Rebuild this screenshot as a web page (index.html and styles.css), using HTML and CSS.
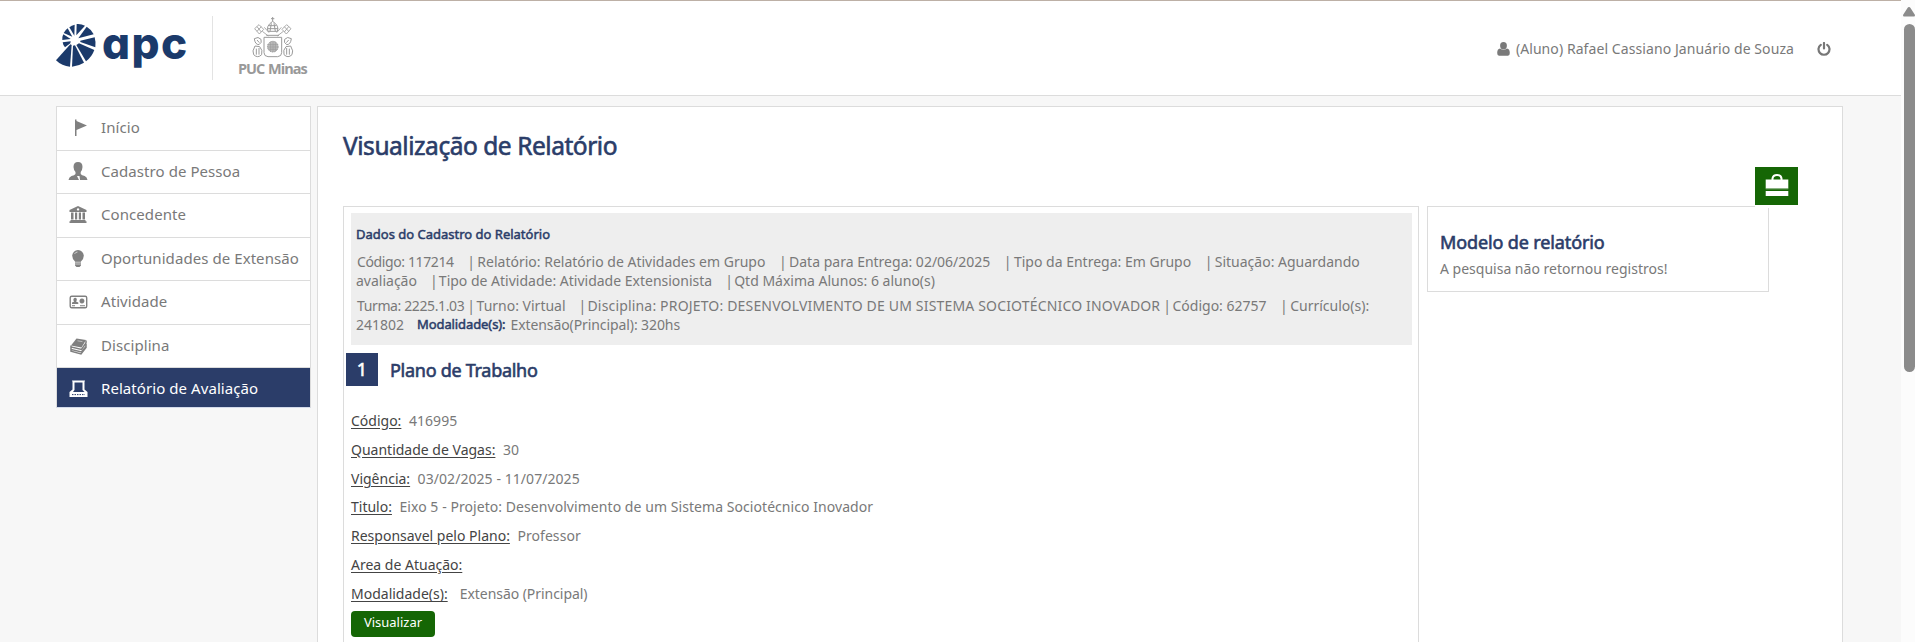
FILE: index.html
```html
<!DOCTYPE html>
<html lang="pt-BR">
<head>
<meta charset="utf-8">
<title>APC - Visualização de Relatório</title>
<link rel="stylesheet" href="styles.css">
</head>
<body>
<div class="page">
  <header class="header">
    <div class="brand">
      <svg class="brand-mark" viewBox="0 0 132 150"><g fill="#1b3a6b"><path d="M68 12Q82 11 93 17L67 46Z"/><path d="M98 20Q112 28 119 43L73 55Z"/><path d="M122 52Q126 66 124 82L79 66V62Z"/><path d="M121 90Q114 110 96 124L67 75L75 70Z"/><path d="M90 128Q74 138 54 140L57 77L63 76Z"/><path d="M6 121Q24 139 48 140L53 75L49 73Z"/><path d="M33 82Q27 76 26 67L50 64L49 70Z"/><path d="M25 60Q24 50 28 43L50 57Z"/><path d="M29 39Q33 31 41 25L55 50Z"/><path d="M46 22Q53 16 62 14L61 47Z"/></g></svg>
      <span class="brand-name">apc</span>
    </div>
    <div class="puc">
      <svg class="crest" viewBox="0 0 168 144" fill="none" stroke="#9a9a9a" stroke-width="3"><path d="M83 9V22M78 14H88M69 52Q62 36 83 22Q104 36 97 52ZM67 44H99M72 35H94M75 52L79 28M91 52L87 28"/><path d="M29 44L42 32L56 46L43 60ZM111 46L125 32L138 44L124 60ZM36 52L49 38M36 38L49 54M118 38L131 52M131 38L118 54M52 52L70 66M115 52L97 66M58 40L72 56M109 40L95 56" stroke-width="2.5"/><path d="M57 70H110V116Q110 127 98 128H69Q57 127 57 116Z"/><path d="M64 64H102"/><circle cx="83.500" cy="98" r="16" fill="#bdbdbd" stroke-dasharray="4 2"/><path d="M68 92H99M68 99H99M70 106H97M77 83V113M84 82V114M91 83V113" stroke-width="2"/><path d="M28 74Q40 66 48 76Q52 86 42 92Q30 92 28 74ZM30 96Q20 112 26 122Q38 134 50 122Q54 108 44 98ZM34 104V122M42 102V122M139 74Q127 66 119 76Q115 86 125 92Q137 92 139 74ZM137 96Q147 112 141 122Q129 134 117 122Q113 108 123 98ZM133 104V122M125 102V122M36 78L43 86M131 78L124 86"/></svg>
      <span class="puc-name">PUC Minas</span>
    </div>
    <div class="user">
      <svg class="user-icon" viewBox="0 0 13 14"><path fill="#7a7a7a" d="M6.500 0a3.400 3.700 0 0 1 0 7.400a3.400 3.700 0 0 1 0-7.400M3 6.600Q6.500 9.500 10 6.600Q12.800 7 12.800 11Q12.800 13.700 11 13.700H2Q.2 13.700 .2 11Q.2 7 3 6.600"/></svg>
      <span class="user-name">(Aluno) Rafael Cassiano Januário de Souza</span>
      <svg class="power" viewBox="0 0 14 14" fill="none" stroke="#777" stroke-width="2.200" stroke-linecap="round"><path d="M7 1V6.500M3.800 2.800A5.500 5.500 0 1 0 10.200 2.800"/></svg>
    </div>
  </header>
  <div class="body">
    <nav class="menu">
      <a class="item"><svg viewBox="0 0 20 20"><path fill="#808080" d="M7 1.500h1.500V3L19 7.500L8.500 12V18H7z"/></svg>Início</a>
      <a class="item"><svg viewBox="0 0 20 20"><path fill="#808080" d="M10 0q4.500 0 4.500 5q0 2.500-1.800 5v2q1 1.300 4 2Q19 15 19.500 18H.5Q1 15 3.500 14q3-.7 4-2v-2Q5.500 7.500 5.500 5Q5.500 0 10 0"/><path fill="#fff" d="M9 14h2.500l.5 4h-1z"/></svg>Cadastro de Pessoa</a>
      <a class="item"><svg viewBox="0 0 20 20"><path fill="#808080" fill-rule="evenodd" d="M10 1L18.500 5v2H1.500V5zM10 3.200a1.200 1.200 0 1 0 .1 0M3 7.500h2.500v7H3zm4 0h2.200v7H7zm3.800 0H13v7h-2.200zm3.700 0H17v7h-2.500zM2.500 15h15v1.200h1V18H1.500v-1.800h1z"/></svg>Concedente</a>
      <a class="item"><svg viewBox="0 0 20 20"><path fill="#808080" d="M10 1a5.800 5.800 0 0 1 5.800 5.800q0 3-2.800 5.700v4l-1.500 1.500h-3L7 16.500v-4Q4.200 9.800 4.200 6.800A5.800 5.800 0 0 1 10 1"/><path stroke="#fff" stroke-width=".6" d="M7 13.200h6M7 15h6M6.500 5Q7.500 3 9.500 3" fill="none"/></svg>Oportunidades de Extensão</a>
      <a class="item"><svg viewBox="0 0 20 20"><rect x="2.200" y="4.200" width="16.500" height="11.600" rx="1.500" fill="none" stroke="#808080" stroke-width="1.400"/><path fill="#808080" d="M7 5.700a1.800 2 0 0 1 1 3.700l2.300 1V12H4v-1.600l2.200-1a1.800 2 0 0 1 .8-3.700M14 6.500a2.500 2.500 0 1 1-.1 0M4 13.300h3v1H4zm8 0h5v1h-5z"/></svg>Atividade</a>
      <a class="item"><svg viewBox="0 0 20 20"><path fill="#808080" d="M8.500 2.500L18 4L13.500 11.500L3 9.500z"/><path fill="none" stroke="#808080" stroke-width="1.500" d="M18 4.500v2.500l-4.500 6.500L3 11V9.500M18 8v2.500L13.500 16L3 13.500v-2M3 13.500v1.800l10 2.700l5-6.500v-1"/><path stroke="#ccc" stroke-width=".8" d="M9.500 4.800l5 .9"/></svg>Disciplina</a>
      <a class="item active"><svg viewBox="0 0 20 20"><path fill="#fff" fill-rule="evenodd" d="M4 1.500h13l-.5 1.500v7.500L19.500 13v5H1.500v-5l3-2.500V3zM6.500 3.500V11L5 13h11.500L14.500 11V3.500z"/><path stroke="#2b3d69" stroke-dasharray="1.500 1" d="M4 15.600h13"/></svg>Relatório de Avaliação</a>
    </nav>
    <main class="content">
      <h1 class="title heavy">Visualização de Relatório</h1>
      <div class="columns">
        <section class="report">
          <div class="summary">
            <h2 class="summary-title heavy">Dados do Cadastro do Relatório</h2>
            <p class="line first"><span class="tight">Código: 117214</span><i>|</i><span>Relatório: Relatório de Atividades em Grupo</span><i>|</i><span>Data para Entrega: 02/06/2025</span><i>|</i><span>Tipo da Entrega: Em Grupo</span><i>|</i><span>Situação: Aguardando</span></p>
            <p class="line"><span>avaliação</span><i class="snug">|</i><span>Tipo de Atividade: Atividade Extensionista</span><i class="snug">|</i><span>Qtd Máxima Alunos: 6 aluno(s)</span></p>
            <p class="line first second"><span class="tight">Turma: 2225.1.03</span><i class="near">|</i><span>Turno: Virtual</span><i class="snug">|</i><span class="caps">Disciplina: PROJETO: DESENVOLVIMENTO DE UM SISTEMA SOCIOTÉCNICO INOVADOR</span><i class="near">|</i><span>Código: 62757</span><i>|</i><span>Currículo(s):</span></p>
            <p class="line"><span>241802</span><b class="mode heavy">Modalidade(s):</b><span class="hours">Extensão(Principal): 320hs</span></p>
          </div>
          <div class="step"><span class="step-no heavy">1</span><h2 class="step-title heavy">Plano de Trabalho</h2></div>
          <dl class="fields">
            <div><dt>Código:</dt><dd>416995</dd></div>
            <div><dt>Quantidade de Vagas:</dt><dd>30</dd></div>
            <div><dt>Vigência:</dt><dd>03/02/2025 - 11/07/2025</dd></div>
            <div><dt>Titulo:</dt><dd>Eixo 5 - Projeto: Desenvolvimento de um Sistema Sociotécnico Inovador</dd></div>
            <div><dt>Responsavel pelo Plano:</dt><dd>Professor</dd></div>
            <div><dt>Area de Atuação:</dt><dd></dd></div>
            <div><dt>Modalidade(s):</dt><dd class="wide">Extensão (Principal)</dd></div>
          </dl>
          <button class="view">Visualizar</button>
        </section>
        <aside class="model">
          <div class="case"><svg viewBox="0 0 24 24"><path fill="none" stroke="#fff" stroke-width="2" d="M7.500 7V5.500Q8 2 12 2Q16 2 16.500 5.500V7"/><path fill="#fff" d="M.7 6.500h22.600v9H.7zM.7 18h22.600v5H.7z"/><path fill="#8fb388" d="M.7 15.500h22.600v.8H.7z"/></svg></div>
          <h2 class="model-title heavy">Modelo de relatório</h2>
          <p class="model-text">A pesquisa não retornou registros!</p>
        </aside>
      </div>
    </main>
  </div>
</div>
<div class="scrollbar"><svg viewBox="0 0 12 10"><path fill="#8b8b8b" d="M6 0Q7 0 7.500 1L12 8Q12 9.500 11 9.500H1Q0 9.500 0 8L4.500 1Q5 0 6 0"/></svg><div class="thumb"></div></div>
</body>
</html>
```
FILE: styles.css
```css
*{box-sizing:border-box}
html,body{margin:0;height:642px;overflow:hidden}
body{display:flex;background:#f7f7f7;color:#797979;font:14px/19px "Noto Sans","Open Sans",sans-serif}
h1,h2,p,dl,dd{margin:0;font-weight:400}
.heavy{color:#2b3d69;font-weight:400;-webkit-text-stroke:.6px currentColor}
.page{width:1901px;flex:none}
.header{display:flex;height:96px;background:#fff;border-top:1px solid #bdb0a6;border-bottom:1px solid #dcdcdc;padding-left:54px}
.brand{display:flex;width:159px;height:64px;margin-top:15px;border-right:1px solid #e3e3e3}
.brand-mark{width:44px;height:50px;margin-top:4px}
.brand-name{margin:5px 0 0 4px;color:#1b3a6b;font:800 44px/44px Inter,sans-serif;font-feature-settings:"cv11";letter-spacing:1.5px}
.puc{width:120px;padding-top:13px}
.crest{display:block;width:56px;height:48px;margin-left:32px}
.puc-name{display:block;margin-top:-3px;padding-left:25px;color:#999;font:700 14.500px/20px "Open Sans",sans-serif;letter-spacing:-1px;word-spacing:1px;white-space:nowrap}
.user{display:flex;margin:38px 70px 0 auto}
.user-icon{width:13px;height:14px;margin:3px 6px 0 0}
.user-name{letter-spacing:.08px}
.power{width:14px;height:14px;margin:3px 0 0 23px}
.body{display:flex;align-items:flex-start;padding:10px 0 0 56px}
.menu{width:255px;border:1px solid #dcdcdc;border-bottom-color:#d3daea;background:#fff}
.item{display:flex;height:43.500px;padding:10px 0 0 12px;border-bottom:1px solid #dcdcdc;font-size:15px;line-height:20px;letter-spacing:.07px;white-space:nowrap}
.item svg{width:20px;height:20px;margin:1px 13px 0 -1px}
.active{height:39px;padding-top:10px;border:0;background:#2b3d69;color:#fff}
.content{width:1526px;height:536px;margin-left:6px;padding:22px 0 0 25px;border:1px solid #dcdcdc;border-bottom:0;background:#fff}
.title{font-size:24.500px;line-height:34px;letter-spacing:-.46px}
.columns{display:flex;align-items:flex-start;gap:8px;margin-top:43px}
.report{width:1076px;height:436px;padding:6px 6px 0 7px;border:1px solid #dcdcdc;border-bottom:0}
.summary{height:132px;padding:12px 5px 0;background:#eee}
.summary-title{font-size:13px;line-height:19px;margin-bottom:8px;-webkit-text-stroke-width:.5px}
.line{display:flex;white-space:nowrap}
.first{padding-left:1px}
.second{margin-top:6px}
.line i{margin:0 2.400px 0 13.500px;font-style:normal}
.line .near{margin-left:3px;margin-right:1.500px}
.line .snug{margin-left:13px;margin-right:1.200px}
.tight{letter-spacing:-.38px}
.caps{letter-spacing:.17px}
.hours{letter-spacing:-.09px}
.mode{margin:0 5px 0 13px;font-size:13px;letter-spacing:-.1px;-webkit-text-stroke-width:.5px}
.step{display:flex;height:33px;margin:8px 0 0 -5px}
.step-no{width:32px;margin-right:12px;background:#2b3d69;color:#fff;font-size:18px;line-height:33px;text-align:center}
.step-title{font-size:18px;line-height:34px;letter-spacing:-.28px}
.fields{margin-top:25px}
.fields div{display:flex;height:28.830px}
.fields dt{color:#444;text-decoration:underline;text-underline-offset:2px}
.fields dd{margin-left:7.500px;letter-spacing:.06px}
.fields .wide{margin-left:12px;letter-spacing:-.05px}
.view{display:block;width:84px;height:26px;margin-top:-2px;padding:0 0 3px;border:0;border-radius:4px;background:#156605;color:#fff;font:13px/20px "Noto Sans",sans-serif}
.model{position:relative;width:342px;height:86px;padding:23px 0 0 12px;border:1px solid #dcdcdc}
.model-title{font-size:18px;line-height:24px;letter-spacing:-.12px}
.model-text{margin-top:5px}
.case{position:absolute;left:327px;top:-40px;width:43px;height:41px;border-bottom:3px solid #fff;background:#156605;text-align:center}
.case svg{width:24px;height:24px;margin-top:6px}
.scrollbar{flex:none;width:14px;height:642px;padding:7px 0 0 3px;background:#fcfcfc}
.scrollbar svg{display:block;width:12px;height:10px;margin-left:-1px}
.thumb{width:11px;height:348px;margin-top:7px;border-radius:6px;background:#8b8b8b}
```
